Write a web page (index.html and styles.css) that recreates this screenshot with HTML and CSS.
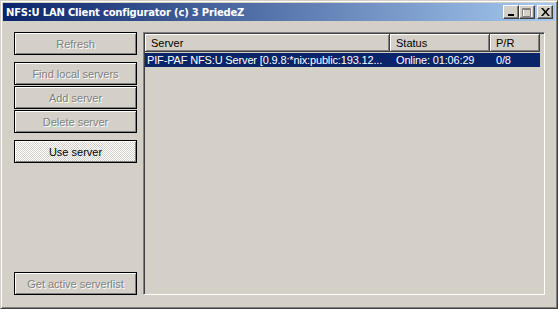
FILE: index.html
```html
<!DOCTYPE html>
<html>
<head>
<meta charset="utf-8">
<link rel="stylesheet" href="styles.css">
</head>
<body>
<div class="window">
  <div class="titlebar">
    <span class="title">NFS:U LAN Client configurator (c) 3 PriedeZ</span>
    <div class="caption-buttons">
      <div class="cbtn">
        <svg width="8" height="7" viewBox="0 0 8 7"><rect x="1" y="5" width="6" height="2" fill="#000"/></svg>
      </div>
      <div class="cbtn cbtn-max">
        <svg width="10" height="9" viewBox="0 0 10 9"><path d="M1.5 0.5h8v8h-8z" fill="none" stroke="#fff"/><path d="M0.5 0.5h8v8h-8z M0.5 1.5h8" fill="none" stroke="#808080"/></svg>
      </div>
      <div class="cbtn cbtn-close">
        <svg width="9" height="8" viewBox="0 0 9 8"><path d="M0 0h2l2.5 3 2.5-3h2l-3.5 4 3.5 4h-2l-2.5-3-2.5 3h-2l3.5-4z" fill="#000"/></svg>
      </div>
    </div>
  </div>
  <div class="client">
    <div class="sidebar">
      <div class="btn disabled">Refresh</div>
      <div class="btn-group">
        <div class="btn disabled">Find local servers</div>
        <div class="btn disabled">Add server</div>
        <div class="btn disabled">Delete server</div>
      </div>
      <div class="btn pressed">Use server</div>
      <div class="btn disabled bottom">Get active serverlist</div>
    </div>
    <div class="listview">
      <div class="header">
        <div class="col col-server">Server</div>
        <div class="col col-status">Status</div>
        <div class="col col-pr">P/R</div>
      </div>
      <div class="row selected">
        <div class="cell col-server">PIF-PAF NFS:U Server [0.9.8:*nix:public:193.12...</div>
        <div class="cell col-status">Online: 01:06:29</div>
        <div class="cell col-pr">0/8</div>
      </div>
    </div>
  </div>
</div>
</body>
</html>
```
FILE: styles.css
```css
html, body {
  margin: 0;
  padding: 0;
  background: #d4d0c8;
}
.window {
  width: 558px;
  height: 309px;
  box-sizing: border-box;
  background: #d4d0c8;
  border-top: 1px solid #d4d0c8;
  border-left: 1px solid #d4d0c8;
  border-right: 1px solid #404040;
  border-bottom: 1px solid #404040;
  box-shadow: inset 1px 1px #fff, inset -1px -1px #808080;
  padding: 2px;
  display: flex;
  flex-direction: column;
  font-family: "Liberation Sans", Arial, sans-serif;
  font-size: 11px;
}
.titlebar {
  height: 18px;
  flex: none;
  background: linear-gradient(90deg, #0a246a, #a6caf0);
  display: flex;
  align-items: center;
  justify-content: space-between;
  padding: 0 2px 0 2px;
}
.title {
  color: #fff;
  font-weight: bold;
  font-family: "DejaVu Sans", sans-serif;
  font-size: 10px;
  letter-spacing: -0.2px;
  padding-left: 1px;
}
.caption-buttons {
  display: flex;
  align-items: center;
}
.cbtn {
  width: 16px;
  height: 14px;
  box-sizing: border-box;
  background: #d4d0c8;
  border-top: 1px solid #fff;
  border-left: 1px solid #fff;
  border-right: 1px solid #404040;
  border-bottom: 1px solid #404040;
  box-shadow: inset -1px -1px #808080;
  display: flex;
  align-items: center;
  justify-content: center;
}
.cbtn svg { display: block; }
.cbtn-close { margin-left: 2px; }
.client {
  flex: 1;
  display: flex;
  gap: 6px;
  padding: 11px 10px 11px 11px;
}
.sidebar {
  width: 123px;
  flex: none;
  display: flex;
  flex-direction: column;
  gap: 7px;
}
.btn-group {
  display: flex;
  flex-direction: column;
  gap: 1px;
}
.btn {
  height: 23px;
  box-sizing: border-box;
  border: 1px solid #000;
  box-shadow: inset 1px 1px #fff, inset -1px -1px #808080;
  display: flex;
  align-items: center;
  justify-content: center;
  color: #000;
  background: #d4d0c8;
}
.btn.disabled {
  color: #808080;
  text-shadow: 1px 1px #fff;
}
.btn.pressed {
  background: repeating-conic-gradient(#fff 0 25%, #d4d0c8 0 50%) 0 0 / 2px 2px;
}
.btn.bottom {
  margin-top: auto;
}
.listview {
  flex: 1;
  box-sizing: border-box;
  border-top: 1px solid #808080;
  border-left: 1px solid #808080;
  border-right: 1px solid #fff;
  border-bottom: 1px solid #fff;
  box-shadow: inset 1px 1px #404040, inset -1px -1px #d4d0c8;
  padding: 1px 4px 1px 1px;
  background: #d4d0c8;
}
.header {
  display: flex;
  height: 18px;
}
.col {
  box-sizing: border-box;
  height: 18px;
  border-right: 1px solid #404040;
  border-bottom: 1px solid #404040;
  box-shadow: inset 1px 1px #fff, inset -1px -1px #808080;
  padding: 0 6px;
  display: flex;
  align-items: center;
  color: #000;
}
.col-server { width: 245px; flex: none; }
.col-status { width: 100px; flex: none; }
.col-pr { width: 50px; flex: none; }
.row {
  display: flex;
  height: 14px;
  margin-top: 1px;
  align-items: center;
}
.row.selected {
  background: #0a246a;
  color: #fff;
}
.cell {
  box-sizing: border-box;
  white-space: nowrap;
  overflow: hidden;
  padding: 0 2px;
  letter-spacing: -0.15px;
}
.cell.col-status, .cell.col-pr {
  padding-left: 6px;
}
```
